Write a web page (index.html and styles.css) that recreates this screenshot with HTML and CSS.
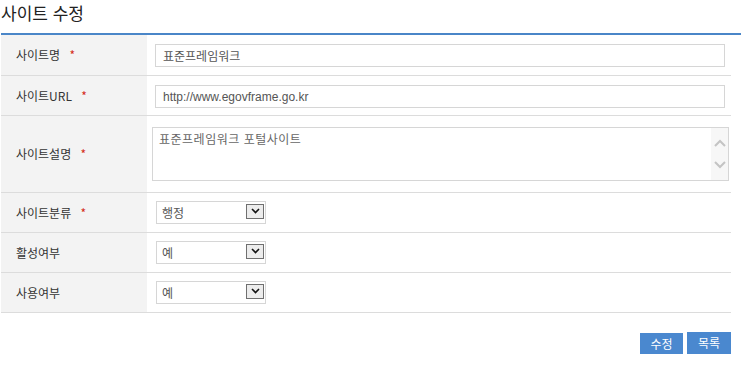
FILE: index.html
```html
<!DOCTYPE html>
<html lang="ko">
<head>
  <meta charset="UTF-8">
  <title>사이트 수정</title>
  <link rel="stylesheet" href="styles.css">
</head>
<body>
  <div class="wrap">
    <h2 class="title">사이트 수정</h2>
    <table class="form">
      <tr>
        <th>사이트명 <span class="req">*</span></th>
        <td><input class="text" type="text" value="표준프레임워크"></td>
      </tr>
      <tr>
        <th>사이트URL <span class="req">*</span></th>
        <td><input class="text" type="text" value="http://www.egovframe.go.kr"></td>
      </tr>
      <tr class="tall">
        <th>사이트설명 <span class="req">*</span></th>
        <td>
          <div class="area">
            <textarea>표준프레임워크 포털사이트</textarea>
            <div class="scroll">
              <svg width="12" height="8" viewBox="0 0 12 8"><path d="M1 7 L6 2 L11 7" fill="none" stroke="#c4c4c4" stroke-width="2"/></svg>
              <svg width="12" height="8" viewBox="0 0 12 8"><path d="M1 1 L6 6 L11 1" fill="none" stroke="#c4c4c4" stroke-width="2"/></svg>
            </div>
          </div>
        </td>
      </tr>
      <tr>
        <th>사이트분류 <span class="req">*</span></th>
        <td>
          <div class="sel">
            <select><option>행정</option></select>
            <span class="arrow"><svg width="9" height="6" viewBox="0 0 9 6"><path d="M1 1 L4.5 4.5 L8 1" fill="none" stroke="#111" stroke-width="1.6"/></svg></span>
          </div>
        </td>
      </tr>
      <tr>
        <th>활성여부</th>
        <td>
          <div class="sel">
            <select><option>예</option></select>
            <span class="arrow"><svg width="9" height="6" viewBox="0 0 9 6"><path d="M1 1 L4.5 4.5 L8 1" fill="none" stroke="#111" stroke-width="1.6"/></svg></span>
          </div>
        </td>
      </tr>
      <tr>
        <th>사용여부</th>
        <td>
          <div class="sel">
            <select><option>예</option></select>
            <span class="arrow"><svg width="9" height="6" viewBox="0 0 9 6"><path d="M1 1 L4.5 4.5 L8 1" fill="none" stroke="#111" stroke-width="1.6"/></svg></span>
          </div>
        </td>
      </tr>
    </table>
    <div class="buttons">
      <button class="btn small">수정</button>
      <button class="btn">목록</button>
    </div>
  </div>
</body>
</html>
```
FILE: styles.css
```css
body {
  margin: 0;
  background-color: #fff;
  font-family: "Noto Sans CJK KR", "Liberation Sans", sans-serif;
  color: #333;
}
.wrap {
  padding-left: 1px;
}
.title {
  margin: 0;
  height: 33px;
  line-height: 26px;
  font-size: 17px;
  font-weight: normal;
  color: #222;
  border-bottom: 2px solid #4a86c8;
}
.form {
  width: 730px;
  border-collapse: collapse;
  table-layout: fixed;
}
.form tr {
  height: 40px;
}
.form tr.tall {
  height: 77px;
}
.form th,
.form td {
  border-bottom: 1px solid #dcdcdc;
  padding: 0;
}
.form th {
  width: 131px;
  background-color: #f3f3f3;
  text-align: left;
  padding-left: 15px;
  font-size: 12px;
  font-weight: normal;
  color: #333;
}
.form td {
  padding-left: 8px;
}
.req {
  color: #d42a1a;
  margin-left: 6px;
}
.text {
  box-sizing: border-box;
  width: 570px;
  height: 23px;
  border: 1px solid #d6d6d6;
  padding: 0 7px;
  font-family: "Liberation Sans", "Noto Sans CJK KR", sans-serif;
  font-size: 12px;
  color: #555;
}
.area {
  display: flex;
  box-sizing: border-box;
  width: 577px;
  height: 54px;
  margin-left: -3px;
  border: 1px solid #d6d6d6;
}
.area textarea {
  flex: 1;
  border: none;
  resize: none;
  padding: 2px 6px;
  font-family: "Noto Sans CJK KR", sans-serif;
  font-size: 12px;
  letter-spacing: 0.5px;
  color: #666;
  outline: none;
}
.scroll {
  width: 17px;
  background-color: #f7f7f7;
  display: flex;
  flex-direction: column;
  align-items: center;
  justify-content: space-around;
  padding: 4px 0;
}
.sel {
  position: relative;
  width: 110px;
  height: 23px;
  margin-left: 1px;
  margin-bottom: 4px;
}
.sel select {
  appearance: none;
  box-sizing: border-box;
  width: 110px;
  height: 23px;
  border: 1px solid #d6d6d6;
  background-color: #fff;
  padding: 0 5px;
  font-family: "Noto Sans CJK KR", sans-serif;
  font-size: 12px;
  color: #555;
}
.arrow {
  position: absolute;
  top: 5px;
  right: 2px;
  box-sizing: border-box;
  width: 18px;
  height: 15px;
  border: 1px solid #6f6f6f;
  background-color: #ececec;
  display: flex;
  align-items: center;
  justify-content: center;
  pointer-events: none;
}
.buttons {
  width: 730px;
  display: flex;
  justify-content: flex-end;
  gap: 4px;
  margin-top: 19px;
}
.btn {
  width: 44px;
  height: 22px;
  border: none;
  padding: 0;
  background-color: #4a88cf;
  color: #fff;
  font-family: "Noto Sans CJK KR", sans-serif;
  font-size: 12px;
}
.btn.small {
  width: 43px;
  height: 21px;
  margin-top: 1px;
}
```
